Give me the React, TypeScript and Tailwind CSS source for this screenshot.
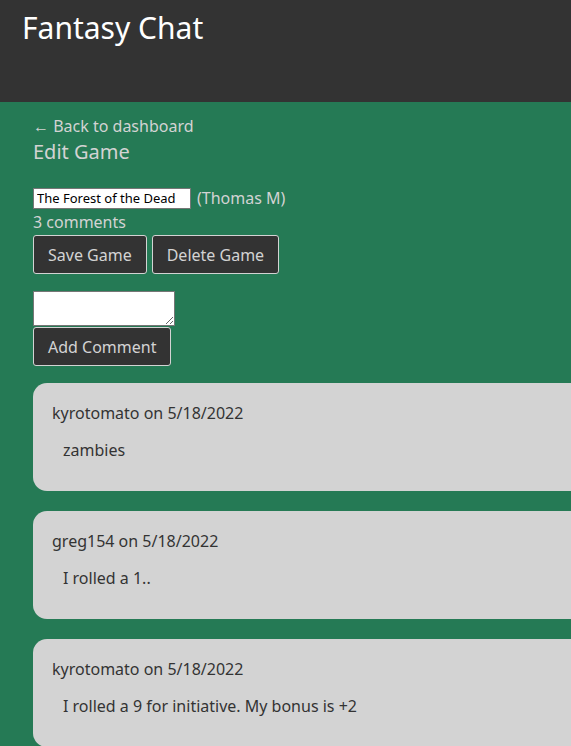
import { useState } from 'react';

type Comment = { id: number; user: string; date: string; text: string };

const comments: Comment[] = [
  { id: 1, user: 'kyrotomato', date: '5/18/2022', text: 'zambies' },
  { id: 2, user: 'greg154', date: '5/18/2022', text: 'I rolled a 1..' },
  { id: 3, user: 'kyrotomato', date: '5/18/2022', text: 'I rolled a 9 for initiative. My bonus is +2' },
];

const btn =
  'h-[39px] px-[14px] rounded-[3px] border border-[#d3d3d3] bg-[#333333] text-[#d3d3d3] text-[16px] leading-none';

export default function App() {
  const [title, setTitle] = useState('The Forest of the Dead');
  const [draft, setDraft] = useState('');

  return (
    <div className="min-h-[746px] overflow-hidden bg-[#257a55] font-['Segoe_UI','Noto_Sans',sans-serif]">
      <header className="h-[102px] bg-[#333333] px-[22px] pt-[6px]">
        <h1 className="text-[30px] leading-[43px] text-white">Fantasy Chat</h1>
      </header>

      <main className="pl-[33px] pt-[12px] text-[#d3d3d3]">
        <a href="#" className="block text-[16px] leading-[24px]">← Back to dashboard</a>
        <h2 className="text-[20px] leading-[28px]">Edit Game</h2>

        <div className="mt-[20px] flex items-center gap-[6px]">
          <input
            value={title}
            onChange={e => setTitle(e.target.value)}
            className="h-[21px] w-[158px] border border-[#767676] bg-white px-[3px] text-[13px] text-black outline-none"
          />
          <span className="text-[16px] leading-[24px]">(Thomas M)</span>
        </div>
        <p className="text-[16px] leading-[24px]">3 comments</p>
        <div className="mt-[1px] flex gap-[5px]">
          <button className={btn}>Save Game</button>
          <button className={btn}>Delete Game</button>
        </div>

        <div className="mt-[17px] flex flex-col items-start">
          <textarea
            value={draft}
            onChange={e => setDraft(e.target.value)}
            className="block h-[35px] w-[142px] border border-[#767676] bg-white text-black outline-none"
          />
          <button className={btn + ' mt-px'}>Add Comment</button>
        </div>

        <ul className="mt-[17px] flex flex-col gap-[20px]">
          {comments.map(c => (
            <li key={c.id} className="h-[108px] w-[600px] rounded-[14px] bg-[#d3d3d3] pl-[19px] pt-[18px] text-[#333333]">
              <p className="text-[16px] leading-[24px]">{c.user} on {c.date}</p>
              <p className="mt-[13px] pl-[11px] text-[16px] leading-[24px]">{c.text}</p>
            </li>
          ))}
        </ul>
      </main>
    </div>
  );
}
